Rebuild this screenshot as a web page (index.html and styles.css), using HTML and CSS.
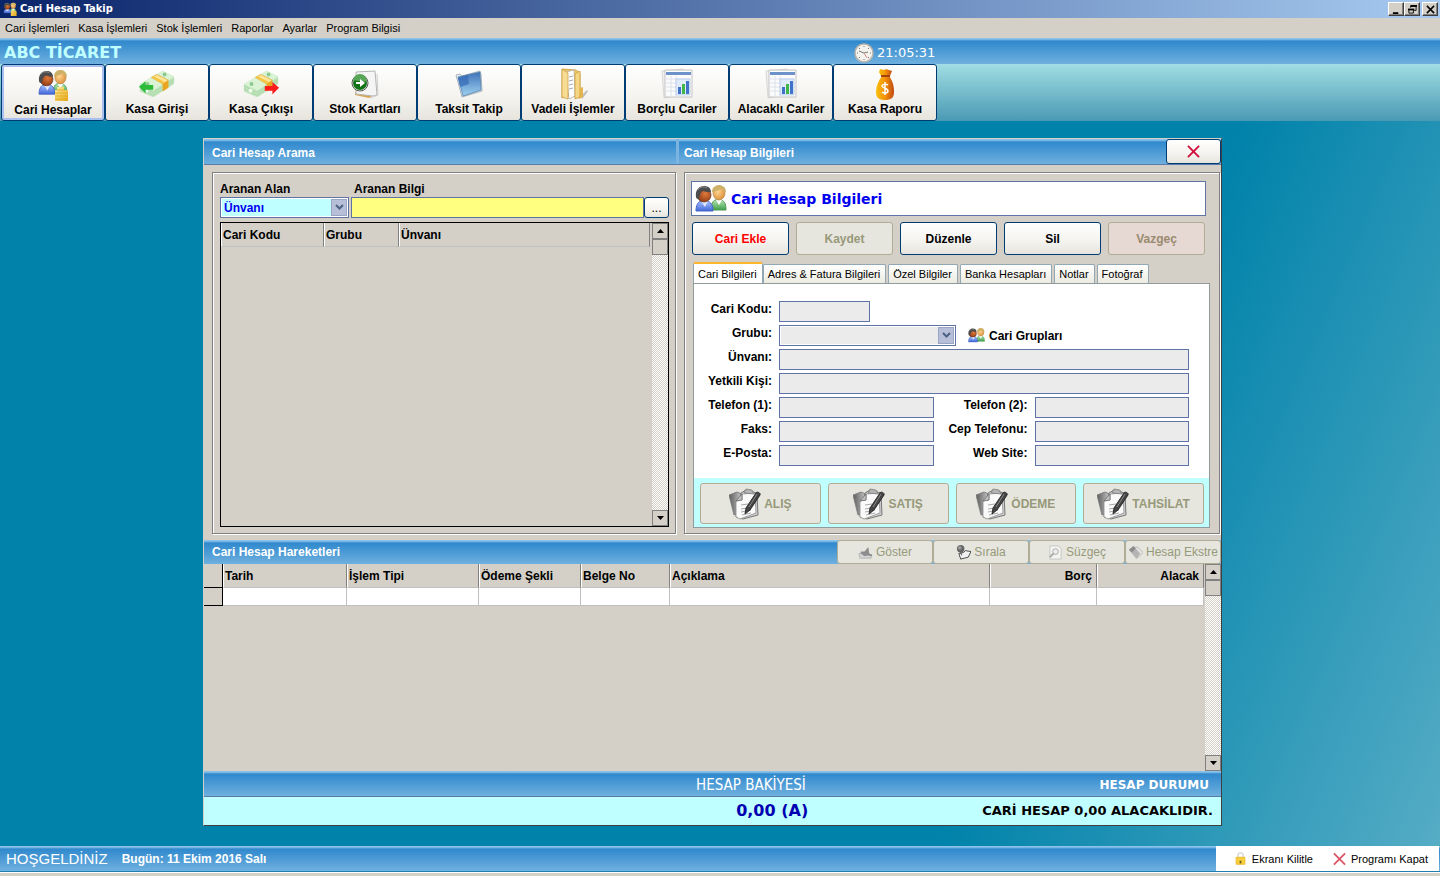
FILE: index.html
```html
<!DOCTYPE html>
<html lang="tr">
<head>
    <meta charset="UTF-8">
    <title>Cari Hesap Takip</title>
    <link rel="stylesheet" href="styles.css">
</head>
<body>
    <!-- Shared icons -->
    <svg class="sprite" width="0" height="0" aria-hidden="true">
        <defs>
            <radialGradient id="dark-skin" cx=".6" cy=".4" r=".7"><stop offset="0" stop-color="#e07a3c"/><stop offset="1" stop-color="#8a3510"/></radialGradient>
            <radialGradient id="light-skin" cx=".4" cy=".4" r=".7"><stop offset="0" stop-color="#ffd590"/><stop offset="1" stop-color="#d98a35"/></radialGradient>
            <linearGradient id="blue-shirt" x1="0" y1="0" x2="0" y2="1"><stop offset="0" stop-color="#a9c3ff"/><stop offset="1" stop-color="#4167d8"/></linearGradient>
            <linearGradient id="green-shirt" x1="0" y1="0" x2="0" y2="1"><stop offset="0" stop-color="#b5e6b5"/><stop offset="1" stop-color="#3f9e48"/></linearGradient>
            <linearGradient id="gold" x1="0" y1="0" x2="1" y2="1"><stop offset="0" stop-color="#fff0a0"/><stop offset="1" stop-color="#e6a817"/></linearGradient>
            <linearGradient id="blue-pane" x1="0" y1="0" x2="0" y2="1"><stop offset="0" stop-color="#3f72b8"/><stop offset="1" stop-color="#9fd2f0"/></linearGradient>
            <linearGradient id="bag" x1="0" y1="0" x2="1" y2="0"><stop offset="0" stop-color="#f9c00c"/><stop offset=".5" stop-color="#f5930a"/><stop offset="1" stop-color="#c04a12"/></linearGradient>
            <linearGradient id="grey-fold" x1="0" y1="0" x2="1" y2="0"><stop offset="0" stop-color="#5c5c5c"/><stop offset="1" stop-color="#c9c9c9"/></linearGradient>
        </defs>
        <symbol id="people" viewBox="0 0 32 28">
            <path d="M16 25c0-6 2-9 4-10h6c4 1 5 5 5 10z" fill="url(#green-shirt)" stroke="#4c9a54"/>
            <path d="M21 15l3 5 3-5z" fill="#fff"/>
            <ellipse cx="24" cy="8" rx="6" ry="7" fill="url(#light-skin)" stroke="#b98a4a" stroke-width=".7"/>
            <path d="M17 7c0-5 4-7 7-7s7 2 7 7c-3 0-4-3-5-4-2 3-5 3-9 4z" fill="#cdb168"/>
            <path d="M1 26c0-6 2-9 5-10h6c4 1 6 4 6 10z" fill="url(#blue-shirt)" stroke="#4565c4"/>
            <path d="M6 16l4 6 3-6z" fill="#dfe8ff"/>
            <circle cx="9" cy="10" r="7" fill="url(#dark-skin)" stroke="#5a3020" stroke-width=".7"/>
            <path d="M1 12C0 5 4 1 9 1c4 0 7 2 7 6-4 1-6-1-8-1-3 1-3 5-4 8-2 0-3-1-3-2z" fill="#4c4c4c"/>
            <path d="M3 5c2-3 5-4 9-2" fill="none" stroke="#8c8c8c"/>
        </symbol>
        <symbol id="people-gold" viewBox="0 0 32 32">
            <use href="#people" x="1" y="1" width="30" height="26"/>
            <path d="M20 18h7v3h4v11H18V21h2z" fill="url(#gold)"/>
            <path d="M18 24h13M18 27h13M18 30h13M20 21h8" stroke="#e0a51c" stroke-width=".8"/>
        </symbol>
        <symbol id="cash" viewBox="0 0 40 32">
            <path d="M2 16L26 2l12 6v8L16 30 2 24z" fill="#bfe3bb"/>
            <path d="M2 16L26 2l12 6-22 15z" fill="#d9f3d4"/>
            <path d="M2 18l14 7L38 11M2 21l14 7L38 13" fill="none" stroke="#a5d4a4" stroke-width=".8"/>
            <path d="M26 15l6-3v8l-6 4z" fill="#e9a51f"/>
            <path d="M14 9l6-3 12 6-6 4z" fill="#ffe59a" stroke="#e0a52c" stroke-width=".7"/>
            <path d="M14 9l3-1 11 6-2 2z" fill="#f5c542"/>
            <circle cx="10" cy="16" r="2" fill="#8cc98c"/><circle cx="28" cy="6" r="2" fill="#8cc98c"/>
            <circle cx="9" cy="23" r="2" fill="#f2fff0"/>
        </symbol>
        <symbol id="cash-in" viewBox="0 0 40 32">
            <use href="#cash" width="40" height="32"/>
            <path d="M1 19l7-6v4h8v5H8v4z" fill="#2dbb3a"/>
        </symbol>
        <symbol id="cash-out" viewBox="0 0 40 32">
            <use href="#cash" width="40" height="32"/>
            <path d="M39 20l-7-6v4h-8v5h8v4z" fill="#fb1c1c"/>
        </symbol>
        <symbol id="stock" viewBox="0 0 32 32">
            <path d="M7 20l-1 7 14 3 3-2z" fill="#d9a550"/>
            <path d="M7 4l19-1 2 24-4 1-17-2z" fill="#f5f5f5" stroke="#b4b4b4"/>
            <path d="M28 6l1 21-8 3" fill="none" stroke="#cdcdcd"/>
            <circle cx="11" cy="15" r="8" fill="#fff" stroke="#555"/>
            <circle cx="11" cy="15" r="7" fill="#137216"/>
            <path d="M4 13a7 7 0 0 1 14 0c-5 3-9-2-14 0z" fill="#58a657"/>
            <path d="M7 14h4v-3l5 4-5 4v-3H7z" fill="#fff"/>
        </symbol>
        <symbol id="blue-folder" viewBox="0 0 32 32">
            <path d="M3 7l4-1 2 2 18-5 1 3 1 17-20 6z" fill="#e9eef2" stroke="#a9b4bd"/>
            <path d="M5 9l22-5 1 18-18 6z" fill="url(#blue-pane)" stroke="#4c7aa6" stroke-width=".7"/>
            <path d="M5 10l10-3 1 9-9 3z" fill="#356bb8" opacity=".7"/>
        </symbol>
        <symbol id="folders" viewBox="0 0 32 32">
            <path d="M24 28l6-6 1 1-2 3-4 5z" fill="#bcbcbc"/>
            <path d="M5 1l14 1 4 3v25L11 27 5 30z" fill="#eec869" stroke="#c99a35" stroke-width=".8"/>
            <path d="M9 4l8-2 1 26-6 3z" fill="#fdfdfd" stroke="#a9a9a9" stroke-width=".7"/>
            <path d="M12 9l4-1M12 13l4-1M12 17l4-1M12 21l4-1" stroke="#a2a9b5"/>
            <path d="M5 1l6 4v26l-6-2z" fill="#f7dd93" stroke="#c99a35" stroke-width=".7"/>
            <path d="M18 6l5-3v26l-5 2z" fill="#f5d684" stroke="#c99a35" stroke-width=".7"/>
            <path d="M23 20l3-1v10l-4 2z" fill="#e4b54e"/>
        </symbol>
        <symbol id="report" viewBox="0 0 32 32">
            <path d="M1 3l21-2 3 26-22 3z" fill="#f0f0f0" stroke="#cfcfcf" stroke-width=".8"/>
            <path d="M4 2h27v27H4z" fill="#fbfbfb" stroke="#c4c4c4"/>
            <path d="M5 4h25v3H5z" fill="#6d92ca"/>
            <path d="M5 11h25M5 15h25M5 19h25M5 23h25M10 8v20M15 8v20" stroke="#dde2ea"/>
            <path d="M15 11h14v16H15z" fill="#dfeafb" stroke="#b0c6e8" stroke-width=".7"/>
            <path d="M17 19h3v7h-3zM25 13h3v13h-3z" fill="#3f73c9"/>
            <path d="M21 16h3v10h-3z" fill="#43b648"/>
        </symbol>
        <symbol id="moneybag" viewBox="0 0 24 32">
            <path d="M7 1l4 1 2-1 6 2-2 5H8L6 4z" fill="url(#bag)"/>
            <path d="M9 8h7c4 5 5 11 5 16 0 6-3 8-9 8s-9-2-9-8c0-5 2-11 6-16z" fill="url(#bag)"/>
            <path d="M8 7h9v2H8z" fill="#a4420f"/>
            <path d="M15 17c-1-1-6-1-6 1s6 2 6 5-5 2-6 1M12 14v13" fill="none" stroke="#fff" stroke-width="1.5"/>
        </symbol>
        <symbol id="clock" viewBox="0 0 20 20">
            <circle cx="10" cy="10" r="9" fill="#f5f3ee" stroke="#b9b4ae" stroke-width="1.5"/>
            <path d="M10 3v1M10 16v1M3 10h1M16 10h1M5 5l1 1M14 14l1 1M5 15l1-1M14 6l1-1" stroke="#777"/>
            <path d="M5 8l5 2 4-1" fill="none" stroke="#777"/>
            <path d="M10 10l3 5" stroke="#d88"/>
        </symbol>
        <symbol id="clipboard" viewBox="0 0 32 32">
            <path d="M0 7l8-3 5 2-4 20-4 1z" fill="url(#grey-fold)" stroke="#777" stroke-width=".8"/>
            <path d="M12 5l5-3 11 3 1 22-15 4-7-2z" fill="#d0d0d0" stroke="#777"/>
            <path d="M7 13l6-1V6l13-1 1 20-16 6-4-2z" fill="#fafafa" stroke="#8b8b8b" stroke-width=".8"/>
            <path d="M7 13l6-7v6z" fill="#c4c4c4" stroke="#666" stroke-width=".7"/>
            <path d="M15 5l2-4 6 1 2 4z" fill="#b4b4b4" stroke="#777" stroke-width=".7"/>
            <path d="M12 17l7-1M12 21l6-1M12 24l10-2M13 27l9-2" stroke="#aaa"/>
            <path d="M16 26l1-6L27 5c1-2 5 0 4 2L21 22z" fill="#444" stroke="#2c2c2c"/>
            <path d="M20 19l8-13" stroke="#8a8a8a"/>
        </symbol>
        <symbol id="show" viewBox="0 0 16 16">
            <path d="M1 9h5l2 2h6v3H2z" fill="#d4d4d4" stroke="#b4b4b4"/>
            <path d="M3 9V7h4l4-5 1 7 3 1v2l-5-1-3 1z" fill="#8d8d8d"/>
        </symbol>
        <symbol id="sort" viewBox="0 0 16 16">
            <circle cx="5" cy="4" r="4" fill="#666"/><circle cx="4" cy="3" r="2" fill="#999"/>
            <path d="M3 9l5-1 2-2 6 1-3 6-8 2z" fill="#f1f1f1" stroke="#444"/>
            <path d="M5 8l1 3" stroke="#444"/>
        </symbol>
        <symbol id="filter" viewBox="0 0 16 16">
            <path d="M2 1h9l3 3v11H2z" fill="#f3f3f0" stroke="#c4c4c4"/>
            <circle cx="8" cy="7" r="3" fill="#ececec" stroke="#a7a7a7"/>
            <path d="M6 9l-4 4" stroke="#a7a7a7" stroke-width="2"/>
        </symbol>
        <symbol id="extract" viewBox="0 0 16 16">
            <path d="M6 3l4-1 6 6-6 6z" fill="#e4e4e4" stroke="#b5b5b5"/>
            <path d="M1 5l5-4 7 8-4 6z" fill="#b4b4b4"/>
            <path d="M1 5l5-4 2 3-4 4z" fill="#8c8c8c"/>
        </symbol>
        <symbol id="lock" viewBox="0 0 12 16">
            <path d="M3 7V4c0-4 6-4 6 0v3" fill="none" stroke="#d5d5d5" stroke-width="1.5"/>
            <path d="M1 6h10v8H1z" fill="#f9d03c" stroke="#e9b728"/>
            <path d="M5 10h2v3H5z" fill="#6b5a20"/>
        </symbol>
        <symbol id="cross" viewBox="0 0 14 14">
            <path d="M1 1l12 12M13 1L1 13" fill="none" stroke="currentColor" stroke-width="2"/>
        </symbol>
        <symbol id="chevron" viewBox="0 0 9 7">
            <path d="M1 1l3.500 3.500L8 1" fill="none" stroke="#4d6185" stroke-width="2"/>
        </symbol>
        <symbol id="tri-up" viewBox="0 0 7 4"><path d="M0 4h7L3.500 0z"/></symbol>
        <symbol id="tri-down" viewBox="0 0 7 4"><path d="M0 0h7L3.500 4z"/></symbol>
    </svg>

    <!-- Title bar -->
    <header class="titlebar">
        <svg class="app-icon"><use href="#people-gold"/></svg>
        <h1>Cari Hesap Takip</h1>
        <div class="window-buttons">
            <button type="button" aria-label="Simge durumuna küçült"><svg viewBox="0 0 10 10"><path d="M1 8h6v2H1z"/></svg></button>
            <button type="button" aria-label="Önceki boyut"><svg viewBox="0 0 10 10"><path d="M3 1h6v5H7M3 3V1h6" fill="none" stroke="#000"/><path d="M3 0h7v2H3z"/><path d="M1 5h5v4H1z" fill="none" stroke="#000"/><path d="M0 4h7v2H0z"/></svg></button>
            <button type="button" class="close" aria-label="Kapat"><svg viewBox="0 0 10 10"><path d="M1 1l8 8M9 1L1 9" stroke="#000" stroke-width="1.700"/></svg></button>
        </div>
    </header>

    <nav class="menubar">
        <a href="#">Cari İşlemleri</a>
        <a href="#">Kasa İşlemleri</a>
        <a href="#">Stok İşlemleri</a>
        <a href="#">Raporlar</a>
        <a href="#">Ayarlar</a>
        <a href="#">Program Bilgisi</a>
    </nav>

    <div class="company bar">
        <strong>ABC TİCARET</strong>
        <span class="clock"><svg><use href="#clock"/></svg>21:05:31</span>
    </div>

    <!-- Toolbar -->
    <div class="toolbar">
        <button type="button" class="active"><svg><use href="#people-gold"/></svg>Cari Hesaplar</button>
        <button type="button"><svg><use href="#cash-in"/></svg>Kasa Girişi</button>
        <button type="button"><svg><use href="#cash-out"/></svg>Kasa Çıkışı</button>
        <button type="button"><svg><use href="#stock"/></svg>Stok Kartları</button>
        <button type="button"><svg><use href="#blue-folder"/></svg>Taksit Takip</button>
        <button type="button"><svg><use href="#folders"/></svg>Vadeli İşlemler</button>
        <button type="button"><svg><use href="#report"/></svg>Borçlu Cariler</button>
        <button type="button"><svg><use href="#report"/></svg>Alacaklı Cariler</button>
        <button type="button"><svg><use href="#moneybag"/></svg>Kasa Raporu</button>
    </div>

    <main class="workspace">
        <div class="window">
            <div class="columns headings">
                <h2 class="bar">Cari Hesap Arama</h2>
                <div class="bar info-heading">
                    <h2>Cari Hesap Bilgileri</h2>
                    <button type="button" class="xp-button" aria-label="Pencereyi kapat"><svg><use href="#cross"/></svg></button>
                </div>
            </div>

            <div class="columns panels">
                <!-- Search -->
                <section class="panel search">
                    <div class="search-row">
                        <div class="search-field">
                            <label for="search-area">Aranan Alan</label>
                            <span class="combo aqua">
                                <select id="search-area"><option>Ünvanı</option></select>
                                <span class="combo-arrow"><svg><use href="#chevron"/></svg></span>
                            </span>
                        </div>
                        <div class="search-text">
                            <label for="search-text">Aranan Bilgi</label>
                            <div class="search-input">
                                <input type="text" id="search-text">
                                <button type="button" class="xp-button">...</button>
                            </div>
                        </div>
                    </div>
                    <div class="list">
                        <table>
                            <colgroup><col class="w-code"><col class="w-group"><col></colgroup>
                            <thead><tr><th>Cari Kodu</th><th>Grubu</th><th>Ünvanı</th></tr></thead>
                        </table>
                        <div class="scrollbar">
                            <button type="button" aria-label="Yukarı"><svg><use href="#tri-up"/></svg></button>
                            <span class="thumb"></span>
                            <button type="button" class="down" aria-label="Aşağı"><svg><use href="#tri-down"/></svg></button>
                        </div>
                    </div>
                </section>

                <!-- Account details -->
                <section class="panel details">
                    <div class="caption"><svg><use href="#people"/></svg><h3>Cari Hesap Bilgileri</h3></div>
                    <div class="actions">
                        <button type="button" class="xp-button add">Cari Ekle</button>
                        <button type="button" class="xp-button" disabled>Kaydet</button>
                        <button type="button" class="xp-button">Düzenle</button>
                        <button type="button" class="xp-button">Sil</button>
                        <button type="button" class="xp-button cancel" disabled>Vazgeç</button>
                    </div>
                    <div class="tabs">
                        <button type="button" class="active">Cari Bilgileri</button>
                        <button type="button">Adres &amp; Fatura Bilgileri</button>
                        <button type="button">Özel Bilgiler</button>
                        <button type="button">Banka Hesapları</button>
                        <button type="button">Notlar</button>
                        <button type="button">Fotoğraf</button>
                    </div>
                    <div class="tab-page">
                        <form class="form">
                            <label for="code">Cari Kodu:</label>
                            <div class="wide"><input type="text" id="code" class="short" disabled></div>
                            <label for="group">Grubu:</label>
                            <div class="wide group-row">
                                <span class="combo">
                                    <select id="group" disabled><option></option></select>
                                    <span class="combo-arrow"><svg><use href="#chevron"/></svg></span>
                                </span>
                                <a href="#"><svg><use href="#people"/></svg>Cari Grupları</a>
                            </div>
                            <label for="title">Ünvanı:</label>
                            <input type="text" id="title" class="wide" disabled>
                            <label for="contact">Yetkili Kişi:</label>
                            <input type="text" id="contact" class="wide" disabled>
                            <label for="phone1">Telefon (1):</label>
                            <input type="text" id="phone1" disabled>
                            <label for="phone2">Telefon (2):</label>
                            <input type="text" id="phone2" disabled>
                            <label for="fax">Faks:</label>
                            <input type="text" id="fax" disabled>
                            <label for="mobile">Cep Telefonu:</label>
                            <input type="text" id="mobile" disabled>
                            <label for="email">E-Posta:</label>
                            <input type="text" id="email" disabled>
                            <label for="web">Web Site:</label>
                            <input type="text" id="web" disabled>
                        </form>
                        <div class="operations">
                            <button type="button" class="xp-button" disabled><svg><use href="#clipboard"/></svg>ALIŞ</button>
                            <button type="button" class="xp-button" disabled><svg><use href="#clipboard"/></svg>SATIŞ</button>
                            <button type="button" class="xp-button" disabled><svg><use href="#clipboard"/></svg>ÖDEME</button>
                            <button type="button" class="xp-button" disabled><svg><use href="#clipboard"/></svg>TAHSİLAT</button>
                        </div>
                    </div>
                </section>
            </div>

            <!-- Account movements -->
            <div class="bar moves-heading">
                <h2>Cari Hesap Hareketleri</h2>
                <button type="button" class="xp-button" disabled><svg><use href="#show"/></svg>Göster</button>
                <button type="button" class="xp-button" disabled><svg><use href="#sort"/></svg>Sırala</button>
                <button type="button" class="xp-button" disabled><svg><use href="#filter"/></svg>Süzgeç</button>
                <button type="button" class="xp-button" disabled><svg><use href="#extract"/></svg>Hesap Ekstre</button>
            </div>
            <div class="moves">
                <table>
                    <colgroup><col class="w-mark"><col class="w-date"><col class="w-type"><col class="w-pay"><col class="w-doc"><col><col class="w-sum"><col class="w-sum"></colgroup>
                    <thead>
                        <tr><th class="mark"></th><th>Tarih</th><th>İşlem Tipi</th><th>Ödeme Şekli</th><th>Belge No</th><th>Açıklama</th><th class="number">Borç</th><th class="number">Alacak</th></tr>
                    </thead>
                    <tbody>
                        <tr><td class="mark"></td><td></td><td></td><td></td><td></td><td></td><td></td><td></td></tr>
                    </tbody>
                </table>
                <div class="scrollbar">
                    <button type="button" aria-label="Yukarı"><svg><use href="#tri-up"/></svg></button>
                    <span class="thumb"></span>
                    <button type="button" class="down" aria-label="Aşağı"><svg><use href="#tri-down"/></svg></button>
                </div>
            </div>

            <div class="bar totals totals-head"><span>HESAP BAKİYESİ</span><strong>HESAP DURUMU</strong></div>
            <div class="totals totals-body"><strong class="balance">0,00 (A)</strong><strong>CARİ HESAP 0,00 ALACAKLIDIR.</strong></div>
        </div>
    </main>

    <!-- Status bar -->
    <footer class="status bar">
        <span class="welcome">HOŞGELDİNİZ</span>
        <strong>Bugün: 11 Ekim 2016 Salı</strong>
        <div class="status-buttons">
            <button type="button"><svg><use href="#lock"/></svg>Ekranı Kilitle</button>
            <button type="button" class="quit"><svg><use href="#cross"/></svg>Programı Kapat</button>
        </div>
    </footer>
</body>
</html>
```

FILE: styles.css
```css
* {
    box-sizing: border-box;
}
body {
    margin: 0;
    min-height: 100vh;
    display: flex;
    flex-direction: column;
    background-color: #d4d0c8;
    font-family: "Liberation Sans", Arial, sans-serif;
    font-size: 12px;
    line-height: 14px;
    color: #000;
}
h1, h2, h3 {
    margin: 0;
    font-size: 12px;
}
button, input, select {
    font: inherit;
    color: inherit;
    margin: 0;
    border-radius: 0;
}
button {
    padding: 0;
}
a {
    color: inherit;
    text-decoration: none;
}
svg {
    flex: none;
}
.sprite {
    position: absolute;
}
.bar {
    background: linear-gradient(#8cc3ea 0, #8cc3ea 1px, #3089cd 3px, #6fb0df 100%);
    color: #fff;
}

/* Title bar and menu */
.titlebar {
    height: 18px;
    display: flex;
    align-items: center;
    padding: 0 2px 0 3px;
    background: linear-gradient(to right, #0a246a, #a6caf0);
    color: #fff;
}
.titlebar h1 {
    margin-left: 3px;
    flex: 1;
    font-family: "DejaVu Sans Condensed", "DejaVu Sans", sans-serif;
    font-size: 11px;
}
.app-icon {
    width: 14px;
    height: 14px;
}
.window-buttons {
    display: flex;
}
.window-buttons button {
    width: 16px;
    height: 14px;
    display: flex;
    align-items: center;
    justify-content: center;
    background-color: #d4d0c8;
    border: 1px solid;
    border-color: #fff #404040 #404040 #fff;
    box-shadow: inset -1px -1px #808080;
}
.window-buttons .close {
    margin-left: 2px;
}
.window-buttons svg {
    width: 9px;
    height: 9px;
}
.menubar {
    height: 20px;
    display: flex;
    align-items: center;
    gap: 9px;
    padding: 0 5px;
    font-size: 11px;
}
.company {
    height: 26px;
    display: flex;
    align-items: center;
    padding: 3px 4px 0;
    font-family: "DejaVu Sans", Verdana, sans-serif;
}
.company strong {
    width: 850px;
    color: #c0ffff;
    font-size: 16px;
}
.clock {
    display: flex;
    align-items: center;
    gap: 3px;
    font-size: 13px;
}
.clock svg {
    width: 20px;
    height: 20px;
}

/* Toolbar */
.toolbar {
    height: 57px;
    display: flex;
    padding-left: 1px;
    background: linear-gradient(#a1dde3, #4a9ab4);
}
.toolbar button {
    width: 104px;
    display: flex;
    flex-direction: column;
    align-items: center;
    gap: 2px;
    padding-top: 3px;
    border: 1px solid #003c74;
    border-radius: 3px;
    background: linear-gradient(#fff, #f4f3ef 60%, #e6e4dc);
    font-weight: bold;
}
.toolbar svg {
    width: 38px;
    height: 32px;
}
.toolbar .active {
    box-shadow: inset 0 0 0 2px #a9bff0;
    padding-top: 4px;
}

/* Workspace */
.workspace {
    flex: 1;
    display: flex;
    padding: 17px 218px 20px 203px;
    background: linear-gradient(113deg, #0082aa 71%, #55acc5 100%);
}
.window {
    flex: 1;
    min-width: 0;
    display: flex;
    flex-direction: column;
    background-color: #d4d0c8;
    border: 1px solid;
    border-color: #d4d0c8 #404040 #404040 #d4d0c8;
}
.columns {
    display: grid;
    grid-template-columns: 472fr 545fr;
}
.headings {
    height: 26px;
    border-bottom: 1px solid #5a78a8;
}
.headings .bar {
    padding-left: 8px;
}
.headings h2 {
    padding-top: 4px;
    line-height: 21px;
}
.headings .info-heading {
    display: flex;
    justify-content: space-between;
    border-left: 3px solid #7bb4e0;
    padding-left: 5px;
}
.info-heading button {
    width: 55px;
    display: flex;
    align-items: center;
    justify-content: center;
    color: #d0103a;
}
.info-heading svg {
    width: 13px;
    height: 13px;
}
.panels {
    padding: 7px 1px 6px 8px;
    gap: 8px;
    grid-template-columns: 464fr 536fr;
}
.panel {
    border: 1px solid #808080;
    box-shadow: inset 1px 1px #fff, 1px 1px #fff;
    min-width: 0;
}
.xp-button {
    border: 1px solid #003c74;
    border-radius: 3px;
    background: linear-gradient(#fff, #f4f3ef 60%, #e6e4dc);
}
.xp-button:disabled {
    border-color: #b0ad94;
    background: #e6e6df;
    color: #96997a;
}

/* Search panel */
.search {
    display: flex;
    flex-direction: column;
    padding: 9px 6px 6px 7px;
}
.search-row {
    display: flex;
    gap: 2px;
    margin-bottom: 4px;
}
.search label {
    display: block;
    font-weight: bold;
    margin-bottom: 1px;
}
.search-field {
    width: 129px;
}
.search-text {
    flex: 1;
}
.search-text label {
    margin-left: 3px;
}
.search-input {
    display: flex;
    height: 21px;
}
.search-input input {
    flex: 1;
    min-width: 0;
    border: 1px solid #5f74a5;
    background-color: #ffff80;
}
.search-input button {
    width: 25px;
}
.combo {
    position: relative;
    display: block;
    height: 21px;
    border: 1px solid #5f74a5;
    background-color: #fff;
    padding: 1px;
}
.combo select {
    appearance: none;
    display: block;
    width: 100%;
    height: 17px;
    border: 0;
    padding: 0 20px 0 2px;
    background-color: #ebebeb;
    opacity: 1;
}
.combo.aqua select {
    background-color: #c0ffff;
    color: #0000f0;
    font-weight: bold;
}
.combo-arrow {
    position: absolute;
    top: 1px;
    right: 1px;
    width: 16px;
    height: 17px;
    display: flex;
    align-items: center;
    justify-content: center;
    border: 1px solid #9aa5c4;
    background-color: #b7bfd8;
    pointer-events: none;
}
.combo-arrow svg {
    width: 9px;
    height: 7px;
}
.list {
    flex: 1;
    display: flex;
    align-items: flex-start;
    border: 1px solid #000;
}
table {
    flex: 1;
    table-layout: fixed;
    width: 100%;
    border-collapse: separate;
    border-spacing: 0;
}
th {
    height: 24px;
    padding: 0 4px 0 1px;
    text-align: left;
    border: 1px solid;
    border-color: #d4d0c8 #808080 #c0c0c0 #fff;
    border-top: 0;
}
.w-code {
    width: 103px;
}
.w-group {
    width: 75px;
}
.scrollbar {
    align-self: stretch;
    width: 16px;
    margin-left: 2px;
    display: flex;
    flex-direction: column;
    background: conic-gradient(#fff 25%, #d4d0c8 0 50%, #fff 0 75%, #d4d0c8 0) 0 0 / 2px 2px;
}
.scrollbar button,
.thumb {
    height: 16px;
    display: flex;
    align-items: center;
    justify-content: center;
    border: 1px solid #808080;
    background-color: #d4d0c8;
}
.scrollbar .down {
    margin-top: auto;
}
.scrollbar svg {
    width: 7px;
    height: 4px;
}

/* Details panel */
.details {
    padding: 8px 9px 5px 6px;
}
.caption {
    height: 35px;
    display: flex;
    align-items: center;
    gap: 4px;
    margin-right: 4px;
    padding-left: 3px;
    border: 1px solid #5f74a5;
    background-color: #fff;
}
.caption svg {
    width: 32px;
    height: 28px;
}
.caption h3 {
    font-family: "DejaVu Sans", Verdana, sans-serif;
    font-size: 14px;
    line-height: 18px;
    color: #0000f0;
}
.actions {
    display: grid;
    grid-template-columns: repeat(5, 1fr);
    gap: 7px;
    margin: 6px 5px 7px 1px;
}
.actions button {
    height: 33px;
    font-weight: bold;
}
.actions .add {
    color: #f00;
}
.actions .cancel:disabled {
    background-color: #e6d8d3;
    color: #998a70;
}
.tabs {
    display: flex;
    align-items: flex-end;
    gap: 2px;
    padding-left: 2px;
    height: 21px;
}
.tabs button {
    height: 19px;
    padding: 0 5px 0 4px;
    border: 1px solid #91a7b4;
    border-bottom: 0;
    border-radius: 2px 2px 0 0;
    background: linear-gradient(#fff, #ecebe1);
    font-size: 11px;
    white-space: nowrap;
}
.tabs .active {
    height: 21px;
    margin-right: -2px;
    border-top: 2px solid #ffb52c;
    background: #fff;
}
.tab-page {
    margin-left: 2px;
    border: 1px solid #919b9c;
    background-color: #fff;
}
.form {
    display: grid;
    grid-template-columns: 78px 1fr 87px 1fr;
    column-gap: 7px;
    row-gap: 3px;
    padding: 17px 20px 12px 0;
    font-weight: bold;
}
.form label {
    padding-top: 1px;
    text-align: right;
}
.form input {
    width: 100%;
    height: 21px;
    border: 1px solid #5f74a5;
    background-color: #ebebeb;
}
.form .short {
    display: block;
    width: 91px;
}
.wide {
    grid-column: span 3;
}
.group-row {
    display: flex;
    align-items: center;
    gap: 12px;
}
.group-row .combo {
    width: 177px;
}
.group-row a {
    display: flex;
    align-items: center;
    gap: 4px;
}
.group-row a svg {
    width: 17px;
    height: 15px;
}
.operations {
    display: grid;
    grid-template-columns: repeat(4, 1fr);
    gap: 7px;
    padding: 5px 5px 3px 6px;
    background-color: #c0ffff;
}
.operations button {
    height: 41px;
    display: flex;
    align-items: center;
    justify-content: center;
    gap: 3px;
    font-weight: bold;
}
.operations svg {
    width: 32px;
    height: 32px;
}

/* Movements */
.moves-heading {
    height: 24px;
    display: flex;
    padding-left: 8px;
}
.moves-heading h2 {
    flex: 1;
    line-height: 25px;
}
.moves-heading button {
    width: 96px;
    display: flex;
    align-items: center;
    justify-content: center;
    gap: 3px;
    font-size: 12px;
}
.moves-heading svg {
    width: 15px;
    height: 15px;
}
.moves {
    flex: 1;
    display: flex;
    align-items: flex-start;
}
.moves .scrollbar {
    margin-left: 1px;
}
.moves td {
    height: 18px;
    padding: 0;
    background-color: #fff;
    border: solid #c0c0c0;
    border-width: 0 1px 1px 0;
}
.moves .mark {
    background-color: #d4d0c8;
    border: solid #000;
    border-width: 0 1px 1px 0;
}
.moves .number {
    text-align: right;
}
.w-mark {
    width: 19px;
}
.w-date {
    width: 124px;
}
.w-type {
    width: 132px;
}
.w-pay {
    width: 102px;
}
.w-doc {
    width: 89px;
}
.w-sum {
    width: 107px;
}
.totals {
    display: grid;
    grid-template-columns: 609fr 408fr;
    align-items: center;
    text-align: right;
    font-family: "DejaVu Sans", Verdana, sans-serif;
}
.totals-head {
    height: 26px;
    padding: 3px 12px 0 0;
    border-bottom: 1px solid #5a78a8;
}
.totals-head span {
    font-family: "DejaVu Sans Condensed", "DejaVu Sans", sans-serif;
    font-size: 15px;
}
.totals-body {
    height: 28px;
    padding-right: 8px;
    background-color: #c0ffff;
    font-size: 13px;
}
.totals-body .balance {
    font-size: 16px;
    color: #0000b0;
}

/* Status bar */
.status {
    height: 26px;
    margin-bottom: 4px;
    display: flex;
    align-items: center;
    gap: 14px;
    padding-left: 6px;
    border-bottom: 1px solid #1f7fb0;
    box-shadow: 0 1px #fff;
}
.welcome {
    font-size: 15px;
}
.status-buttons {
    align-self: stretch;
    margin-left: auto;
    margin-right: 1px;
    display: flex;
    gap: 20px;
    padding: 0 11px 0 18px;
    background-color: #fff;
    color: #000;
    font-size: 11px;
}
.status-buttons button {
    display: flex;
    align-items: center;
    gap: 5px;
    border: 0;
    background: none;
}
.status-buttons svg {
    width: 13px;
    height: 14px;
}
.status-buttons .quit svg {
    color: #dc5868;
}
```
